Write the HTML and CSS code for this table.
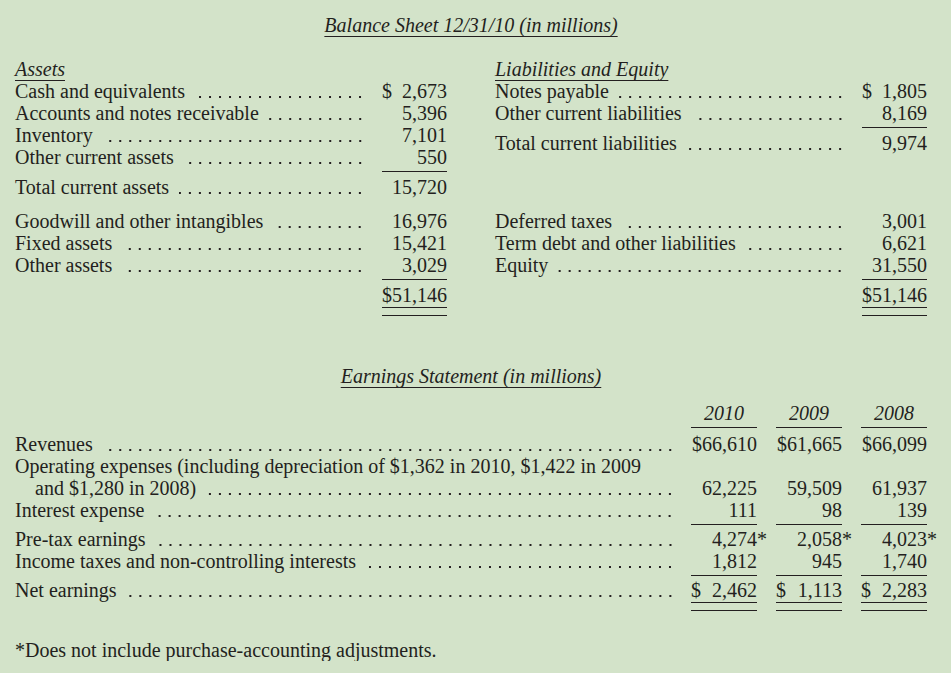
FILE: index.html
```html
<!DOCTYPE html>
<html lang="en">
<head>
<meta charset="utf-8">
<title>Balance Sheet and Earnings Statement</title>
<link rel="stylesheet" href="styles.css">
</head>
<body>
<main class="page">
  <h1 class="title"><span>Balance Sheet 12/31/10 (in millions)</span></h1>

  <div class="bs">
    <div class="grp">
      <div class="head"><span>Assets</span></div>
      <div class="row"><div class="lbl"><span class="txt">Cash and equivalents</span><span class="dots"></span></div><div class="val"><span class="d"><span>$</span><span>2,673</span></span></div></div>
      <div class="row"><div class="lbl"><span class="txt">Accounts and notes receivable</span><span class="dots"></span></div><div class="val">5,396</div></div>
      <div class="row"><div class="lbl"><span class="txt">Inventory</span><span class="dots"></span></div><div class="val">7,101</div></div>
      <div class="row"><div class="lbl"><span class="txt">Other current assets</span><span class="dots"></span></div><div class="val u">550</div></div>
      <div class="row"><div class="lbl"><span class="txt">Total current assets</span><span class="dots"></span></div><div class="val">15,720</div></div>
    </div>
    <div class="grp">
      <div class="head"><span>Liabilities and Equity</span></div>
      <div class="row"><div class="lbl"><span class="txt">Notes payable</span><span class="dots"></span></div><div class="val"><span class="d"><span>$</span><span>1,805</span></span></div></div>
      <div class="row"><div class="lbl"><span class="txt">Other current liabilities</span><span class="dots"></span></div><div class="val u">8,169</div></div>
      <div class="row"><div class="lbl"><span class="txt">Total current liabilities</span><span class="dots"></span></div><div class="val">9,974</div></div>
    </div>

    <div class="grp">
      <div class="row"><div class="lbl"><span class="txt">Goodwill and other intangibles</span><span class="dots"></span></div><div class="val">16,976</div></div>
      <div class="row"><div class="lbl"><span class="txt">Fixed assets</span><span class="dots"></span></div><div class="val">15,421</div></div>
      <div class="row"><div class="lbl"><span class="txt">Other assets</span><span class="dots"></span></div><div class="val u">3,029</div></div>
      <div class="row"><div class="lbl"></div><div class="val uu">$51,146</div></div>
    </div>
    <div class="grp">
      <div class="row"><div class="lbl"><span class="txt">Deferred taxes</span><span class="dots"></span></div><div class="val">3,001</div></div>
      <div class="row"><div class="lbl"><span class="txt">Term debt and other liabilities</span><span class="dots"></span></div><div class="val">6,621</div></div>
      <div class="row"><div class="lbl"><span class="txt">Equity</span><span class="dots"></span></div><div class="val u">31,550</div></div>
      <div class="row"><div class="lbl"></div><div class="val uu">$51,146</div></div>
    </div>
  </div>

  <h2 class="title es-title"><span>Earnings Statement (in millions)</span></h2>

  <div class="es">
    <div class="erow">
      <div class="lbl"></div>
      <div class="yr">2010</div>
      <div class="yr">2009</div>
      <div class="yr">2008</div>
    </div>
    <div class="erow">
      <div class="lbl"><span class="txt">Revenues</span><span class="dots"></span></div>
      <div class="val">$66,610</div>
      <div class="val">$61,665</div>
      <div class="val">$66,099</div>
    </div>
    <div class="erow">
      <div class="multi">
        <div class="line1">Operating expenses (including depreciation of $1,362 in 2010, $1,422 in 2009</div>
        <div class="lbl indent"><span class="txt">and $1,280 in 2008)</span><span class="dots"></span></div>
      </div>
      <div class="val end">62,225</div>
      <div class="val end">59,509</div>
      <div class="val end">61,937</div>
    </div>
    <div class="erow">
      <div class="lbl"><span class="txt">Interest expense</span><span class="dots"></span></div>
      <div class="val u">111</div>
      <div class="val u">98</div>
      <div class="val u">139</div>
    </div>
    <div class="erow">
      <div class="lbl"><span class="txt">Pre-tax earnings</span><span class="dots"></span></div>
      <div class="val">4,274<span class="ast">*</span></div>
      <div class="val">2,058<span class="ast">*</span></div>
      <div class="val">4,023<span class="ast">*</span></div>
    </div>
    <div class="erow">
      <div class="lbl"><span class="txt">Income taxes and non-controlling interests</span><span class="dots"></span></div>
      <div class="val u">1,812</div>
      <div class="val u">945</div>
      <div class="val u">1,740</div>
    </div>
    <div class="erow">
      <div class="lbl"><span class="txt">Net earnings</span><span class="dots"></span></div>
      <div class="val uu"><span class="d"><span>$</span><span>2,462</span></span></div>
      <div class="val uu"><span class="d"><span>$</span><span>1,113</span></span></div>
      <div class="val uu"><span class="d"><span>$</span><span>2,283</span></span></div>
    </div>
  </div>

  <p class="note">*Does not include purchase-accounting adjustments.</p>
</main>
</body>
</html>
```

FILE: styles.css
```css
* {
  box-sizing: border-box;
  margin: 0;
  padding: 0;
}

html,
body {
  background: #d3e3c9;
}

body {
  font-family: "Liberation Serif", "Times New Roman", serif;
  font-size: 20px;
  line-height: 22px;
  color: #231f20;
}

.page {
  width: 951px;
  padding: 14px 24px 0 15px;
}

.title {
  font-size: 20px;
  font-weight: normal;
  font-style: italic;
  line-height: 22px;
  text-align: center;
}

.title span,
.head span {
  text-decoration: underline;
  text-decoration-thickness: 1px;
  text-underline-offset: 3.5px;
}

/* Balance sheet */
.bs {
  display: grid;
  grid-template-columns: 432px 432px;
  column-gap: 48px;
  row-gap: 12px;
  margin-top: 22px;
}

.grp {
  display: flex;
  flex-direction: column;
}

.head {
  font-style: italic;
}

.row {
  display: grid;
  grid-template-columns: 347px 65px;
  column-gap: 20px;
  align-items: start;
}

.lbl {
  display: flex;
  white-space: nowrap;
  min-height: 22px;
}

.txt {
  flex: none;
}

.dots {
  flex: 1;
  min-width: 0;
  padding-left: 10px;
  align-self: stretch;
  background-image: radial-gradient(circle at center, #231f20 0.95px, rgba(35, 31, 32, 0) 1.45px);
  background-size: 10px 4px;
  background-repeat: repeat-x;
  background-position: right -3px top 14.5px;
  background-clip: content-box;
}

.val {
  text-align: right;
  white-space: nowrap;
}

.d {
  display: flex;
  justify-content: space-between;
}

.u {
  border-bottom: 1px solid #231f20;
  padding-bottom: 3px;
  margin-bottom: 4px;
}

.uu::after {
  content: "";
  display: block;
  margin-top: 1px;
  height: 7px;
  border-top: 1px solid #231f20;
  border-bottom: 1px solid #231f20;
}

/* Earnings statement */
.es-title {
  margin-top: 49px;
}

.es {
  margin-top: 15px;
}

.erow {
  display: grid;
  grid-template-columns: 1fr 66px 66px 66px;
  column-gap: 19px;
  align-items: start;
}

.erow .u {
  margin-bottom: 3px;
}

.yr {
  font-style: italic;
  text-align: center;
  border-bottom: 1px solid #231f20;
  padding-bottom: 3px;
  margin-bottom: 5px;
}

.multi .line1 {
  white-space: nowrap;
}

.indent {
  padding-left: 20px;
}

.end {
  align-self: end;
}

.ast {
  margin-right: -10px;
}

.note {
  margin-top: 28px;
}
```
